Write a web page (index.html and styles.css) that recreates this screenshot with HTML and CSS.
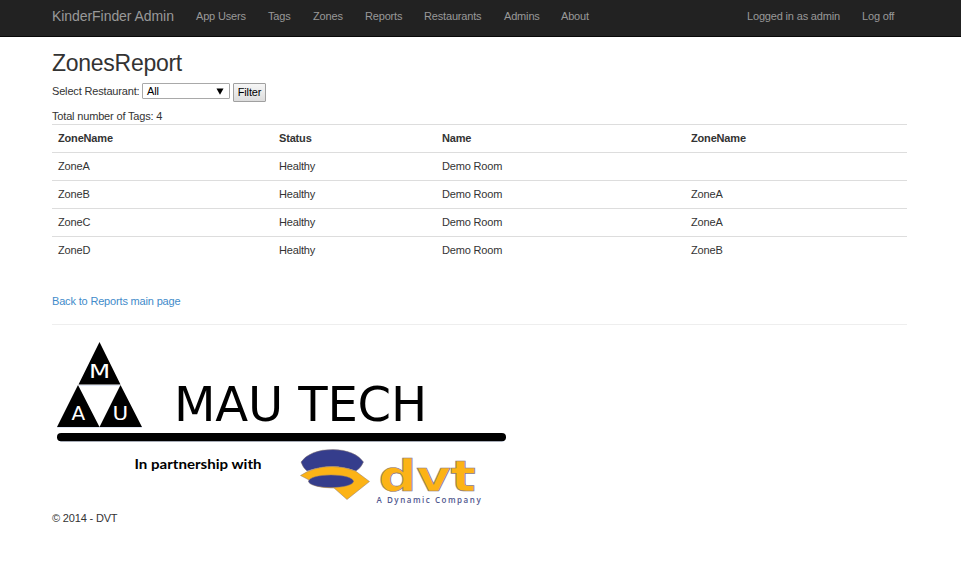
FILE: index.html
```html
<!DOCTYPE html>
<html lang="en">
<head>
<meta charset="utf-8">
<title>ZonesReport</title>
<link rel="stylesheet" href="styles.css">
</head>
<body>
<header class="navbar">
  <nav class="container nav">
    <a class="brand">KinderFinder Admin</a>
    <a class="w-users">App Users</a><a class="w-tags">Tags</a><a class="w-zones">Zones</a><a class="w-reports">Reports</a><a class="w-rest">Restaurants</a><a class="w-admins">Admins</a><a>About</a>
    <div class="account"><a class="w-login">Logged in as admin</a><a class="w-logoff">Log off</a></div>
  </nav>
</header>
<main class="container">
  <h2>ZonesReport</h2>
  <form class="filter">
    <label>Select Restaurant:</label>
    <div class="select"><span>All</span><svg width="8" height="7" viewBox="0 0 8 7"><path d="M.5.5h7L4 6.8z"/></svg></div>
    <button type="button">Filter</button>
  </form>
  <p class="total">Total number of Tags: 4</p>
  <table>
    <colgroup><col class="c1"><col class="c2"><col class="c3"><col></colgroup>
    <tr><th>ZoneName</th><th>Status</th><th>Name</th><th>ZoneName</th></tr>
    <tr><td>ZoneA</td><td>Healthy</td><td>Demo Room</td><td></td></tr>
    <tr><td>ZoneB</td><td>Healthy</td><td>Demo Room</td><td>ZoneA</td></tr>
    <tr><td>ZoneC</td><td>Healthy</td><td>Demo Room</td><td>ZoneA</td></tr>
    <tr><td>ZoneD</td><td>Healthy</td><td>Demo Room</td><td>ZoneB</td></tr>
  </table>
  <a class="back">Back to Reports main page</a>
  <footer>
    <svg class="logo" width="470" height="176" viewBox="52 335 470 176">
      <path d="M99.500 342L120.500 384.500H78.500zM78 385L99.500 427H57zM120.500 385L142 427H99.500z"/>
      <path class="edge" d="M79 385.500h41M57 427.500h85"/>
      <g class="mau">
        <text x="89" y="377.500" textLength="21" lengthAdjust="spacingAndGlyphs">M</text>
        <text x="71.500" y="419.500" textLength="13.500" lengthAdjust="spacingAndGlyphs">A</text>
        <text x="112.500" y="419.500" textLength="15.500" lengthAdjust="spacingAndGlyphs">U</text>
      </g>
      <text class="tech" x="174" y="421" textLength="253" lengthAdjust="spacingAndGlyphs">MAU TECH</text>
      <path class="shade" d="M60 441.500H504"/>
      <rect x="57" y="433" width="449" height="8.300" rx="4.100"/>
      <text class="partner" x="134.500" y="469" textLength="127" lengthAdjust="spacingAndGlyphs">In partnership with</text>
      <g class="emblem">
        <path class="blue" d="M301 462Q310 449.500 333 449.500Q355 450 363.500 462Q361 468 356 471Q333 462 307 471Q303 468 301 462z"/>
        <path class="gold" d="M300.500 475.500Q314 466.500 332 466.500Q344 466.500 355.500 471L369.500 481.500L347 499.500L334 488Q312 488 309 480z"/>
        <ellipse class="blue" cx="331" cy="481.300" rx="22.500" ry="6.300"/>
      </g>
      <text class="dvt" x="378.500" y="491" textLength="97" lengthAdjust="spacingAndGlyphs">dvt</text>
      <text class="tag" x="376.500" y="502.500" textLength="104">A Dynamic Company</text>
    </svg>
    <p>© 2014 - DVT</p>
  </footer>
</main>
</body>
</html>
```
FILE: styles.css
```css
* { box-sizing: border-box; }
body {
  margin: 0;
  background: #fff;
  color: #333;
  font: 11px/16px "Liberation Sans", Arial, sans-serif;
  letter-spacing: -0.17px;
}
.container { width: 855px; margin-left: 52px; }
.navbar { height: 37px; background: #222; border-bottom: 1px solid #080808; }
.nav { display: flex; height: 32px; align-items: center; color: #999; white-space: nowrap; }
.brand { width: 144px; font-size: 14px; letter-spacing: -0.06px; }
.w-users { width: 72px; }
.w-tags { width: 45px; }
.w-zones { width: 52px; }
.w-reports { width: 59px; }
.w-rest { width: 80px; }
.w-admins { width: 57px; }
.account { display: flex; margin-left: auto; }
.w-login { width: 115px; }
.w-logoff { width: 45px; }
h2 { margin: 13px 0 7px; font-size: 23px; line-height: 26px; font-weight: 400; letter-spacing: -0.27px; }
.filter { display: flex; align-items: flex-start; height: 25px; }
.filter label { width: 90px; }
.select {
  display: flex; align-items: center; justify-content: space-between;
  width: 88px; height: 16px; padding: 0 5px 0 4px;
  border: 1px solid #a9a9a9; border-radius: 1px; color: #000;
}
button {
  width: 33px; height: 19px; margin: 0 0 0 3px; padding: 0 0 2px;
  border: 1px solid #a0a0a0; border-radius: 1px;
  background: linear-gradient(#f6f6f6, #ddd);
  color: #000; font: inherit; letter-spacing: inherit;
}
.total { margin: 0; line-height: 16px; }
table { width: 100%; table-layout: fixed; border-collapse: separate; border-spacing: 0; }
.c1 { width: 221px; }
.c2 { width: 163px; }
.c3 { width: 249px; }
th, td { height: 28px; padding: 0 6px 2px; border-top: 1px solid #ddd; text-align: left; }
.back { display: block; margin-top: 29px; color: #428bca; }
footer { margin-top: 15px; border-top: 1px solid #eee; }
.logo { display: block; margin-top: 10px; }
footer p { margin: -1px 0 0; }
.edge, .shade { fill: none; stroke: #dfe6f5; }
.mau { fill: #fff; font: 20px "DejaVu Sans", sans-serif; }
.tech { font: 48px "DejaVu Sans", sans-serif; }
.partner { font: bold 13px Lato, sans-serif; letter-spacing: 0; }
.blue { fill: #353d8c; }
.gold { fill: #fcb316; }
.emblem { stroke: #8c7a75; stroke-width: 0.5; }
.dvt { fill: #fcb316; stroke: #887987; stroke-width: 0.7; font: bold 42px "DejaVu Sans", sans-serif; }
.tag { fill: #51578f; font: 600 8px "Open Sans", sans-serif; }
```
